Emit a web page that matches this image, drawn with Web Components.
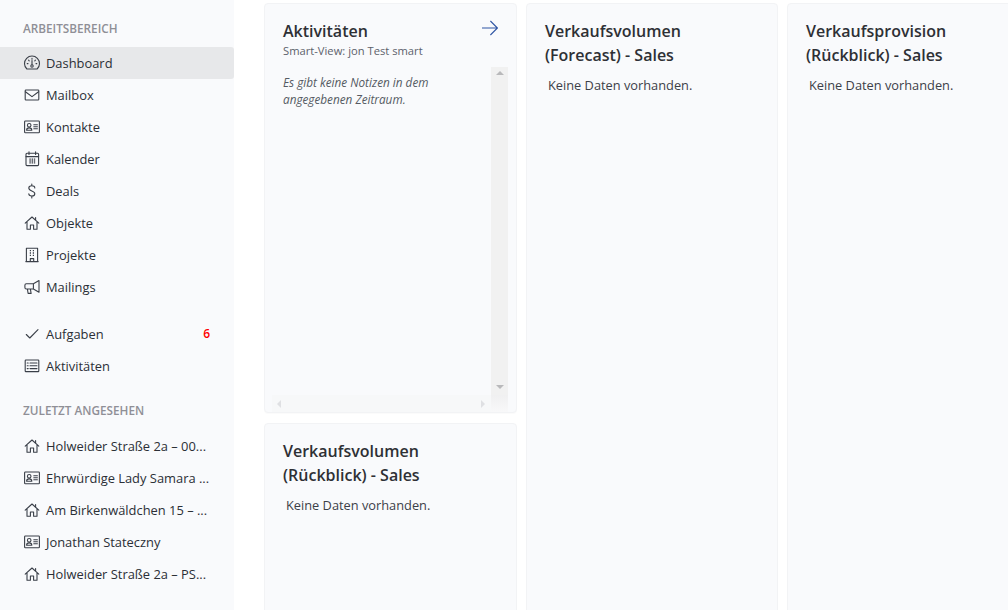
<!DOCTYPE html>
<html lang="de"><head><meta charset="utf-8"><title>Dashboard</title>
<style>
html,body{margin:0;height:100%;overflow:hidden;background:#fff;font-family:"Open Sans","Noto Sans",sans-serif;color:#212529}
#app{display:flex;height:610px;overflow:hidden}
</style></head><body>
<div id="app">
<app-sidebar>
  <nav-title>ARBEITSBEREICH</nav-title>
  <nav-item icon="gauge" active>Dashboard</nav-item>
  <nav-item icon="mail">Mailbox</nav-item>
  <nav-item icon="card">Kontakte</nav-item>
  <nav-item icon="calendar">Kalender</nav-item>
  <nav-item icon="dollar">Deals</nav-item>
  <nav-item icon="house">Objekte</nav-item>
  <nav-item icon="building">Projekte</nav-item>
  <nav-item icon="megaphone">Mailings</nav-item>
  <nav-item icon="check" badge="6" style="margin-top:15px">Aufgaben</nav-item>
  <nav-item icon="list">Aktivitäten</nav-item>
  <nav-title style="margin-top:18px;margin-bottom:10px">ZULETZT ANGESEHEN</nav-title>
  <nav-item icon="house">Holweider Straße 2a – 00...</nav-item>
  <nav-item icon="card">Ehrwürdige Lady Samara ...</nav-item>
  <nav-item icon="house">Am Birkenwäldchen 15 – ...</nav-item>
  <nav-item icon="card">Jonathan Stateczny</nav-item>
  <nav-item icon="house">Holweider Straße 2a – PS...</nav-item>
</app-sidebar>
<dash-board>
  <dash-column style="gap:10px">
    <dash-card heading="Aktivitäten" sub="Smart-View: jon Test smart" arrow style="height:410px"><notes-pane>Es gibt keine Notizen in dem<br>angegebenen Zeitraum.</notes-pane></dash-card>
    <dash-card heading="Verkaufsvolumen<br>(Rückblick) - Sales"><empty-note>Keine Daten vorhanden.</empty-note></dash-card>
  </dash-column>
  <dash-column style="width:252px">
    <dash-card heading="Verkaufsvolumen<br>(Forecast) - Sales"><empty-note>Keine Daten vorhanden.</empty-note></dash-card>
  </dash-column>
  <dash-column>
    <dash-card heading="Verkaufsprovision<br>(Rückblick) - Sales"><empty-note>Keine Daten vorhanden.</empty-note></dash-card>
  </dash-column>
</dash-board>
</div>
<script>
const ICONS={
gauge:'<path d="M2.9 14A7.5 7.5 0 1 1 13.1 14Z"/><path d="M8 3.4v.8M3.2 8.6H4M12 8.6h.8M4.6 5.2l.6.6M11.4 5.2l-.6.6M8 5.6v4"/><circle cx="8" cy="11" r="1.2"/>',
mail:'<rect x="1.2" y="3" width="13.6" height="10" rx=".8"/><path d="M1.4 4.8 8 9.6l6.6-4.8"/>',
card:'<rect x=".6" y="2" width="14.8" height="11.8" rx=".8"/><circle cx="5.2" cy="6.3" r="1.8"/><path d="M2.6 11.2c0-1.8 1.1-2.3 2.6-2.3s2.6.5 2.6 2.3zM9.8 5.8h3.6M9.8 7.8h3.6M9.8 9.8h3.6"/>',
calendar:'<rect x="2" y="2.2" width="12.6" height="12.4" rx="1"/><path d="M2 5.6h12.6M5 .8v2.6M11.6.8v2.6"/><path d="M5.4 8.2h1.4M7.6 8.2h1.4M9.8 8.2h1.4M5.4 10h1.4M7.6 10h1.4M9.8 10h1.4M5.4 11.8h1.4M7.6 11.8h1.4M9.8 11.8h1.4" stroke-linecap="butt" stroke-width="1.3"/>',
dollar:'<path d="M10.8 4.9C10.8 3.5 9.5 2.8 7.8 2.8S4.8 3.6 4.8 5.1c0 1.6 1.3 2.2 3 2.8 1.7.6 3 1.2 3 2.8s-1.3 2.3-3 2.3-3-.8-3-2.2M7.8 1v1.8M7.8 13v2"/>',
house:'<path d="M1.2 8.2 8 2l6.8 6.2M3 6.8v7.5h3.4V10h3.2v4.3H13V6.8M11.6 2.6v2.2"/>',
building:'<path d="M2.4 1.2h11.2v13.4H2.4zM1.8 14.6h12.4M6.3 14.6v-3h3.4v3"/><path d="M5.8 3.6h1.2M8.8 3.6H10M5.8 6h1.2M8.8 6H10M5.8 8.4h1.2M8.8 8.4H10" stroke-linecap="butt" stroke-width="1.3"/>',
megaphone:'<path d="M15 1.6 9.4 4.8H2.3A1.4 1.4 0 0 0 .9 6.2v2.4A1.4 1.4 0 0 0 2.3 10h7.1l5.6 3.2zM9.4 4.8V10M3.4 10l.7 4.4h3L6.4 10"/>',
check:'<path d="M2.3 8.5 5.8 12 14 3.6"/>',
list:'<rect x="1.2" y="2" width="13.6" height="11.6" rx=".7"/><path d="M6 5h7M6 7.8h7M6 10.6h7M3.2 5h1M3.2 7.8h1M3.2 10.6h1"/>'
};
const def=(n,html)=>customElements.define(n,class extends HTMLElement{
  connectedCallback(){if(!this.shadowRoot){const r=this.attachShadow({mode:'open'});r.innerHTML=typeof html==='function'?html(this):html;}}
});
def('app-sidebar',`<style>:host{display:block;flex:none;width:234px;height:610px;background:#f9fafc;padding-top:18px;box-sizing:border-box;overflow:hidden}</style><slot></slot>`);
def('nav-title',`<style>:host{display:block;height:20px;line-height:20px;margin:0 0 9px 23px;font-size:11.75px;font-weight:600;color:#8f8f96}</style><slot></slot>`);
def('nav-item',h=>`<style>
:host{display:flex;align-items:center;height:32px;padding-left:24px;font-size:12.9px;line-height:30px;color:#2b2f36;border-radius:0 3px 3px 0;white-space:nowrap}
:host([active]){background:#e7e8ea}
svg{width:16px;height:16px;flex:none;margin-right:6px;fill:none;stroke:#3a3f48;stroke-width:1.1;stroke-linecap:round;stroke-linejoin:round;overflow:visible}
span{display:block}
b{margin-left:auto;margin-right:24px;font-weight:600;color:#f00;font-size:12px}
</style><svg viewBox="0 0 16 16">${ICONS[h.getAttribute('icon')]}</svg><span><slot></slot></span>${h.hasAttribute('badge')?`<b>${h.getAttribute('badge')}</b>`:''}`);
def('dash-board',`<style>:host{flex:1;min-width:0;display:flex;gap:9px;padding:3px 0 0 30px;overflow:hidden}</style><slot></slot>`);
def('dash-column',`<style>:host{flex:none;width:253px;display:flex;flex-direction:column;gap:9px}</style><slot></slot>`);
def('dash-card',h=>`<style>
:host{display:flex;flex-direction:column;flex:none;height:640px;box-sizing:border-box;background:#f9fafc;border:1px solid #f2f3f5;border-radius:4px;box-shadow:0 1px 1px rgba(0,0,0,.02);padding:15px 8px 0 18px}
header{position:relative;padding-right:10px}
h2{margin:0;font-size:16px;line-height:24px;font-weight:600;color:#2e3035}
p{margin:0;font-size:11.2px;line-height:16px;color:#5c616b}
svg{position:absolute;right:10px;top:1px;width:16px;height:16px;fill:none;stroke:#2f55a4;stroke-width:1.1}
.body{flex:1;min-height:0;margin-top:8px}
</style><header><h2>${h.getAttribute('heading')}</h2>${h.hasAttribute('sub')?`<p>${h.getAttribute('sub')}</p>`:''}${h.hasAttribute('arrow')?'<svg viewBox="0 0 16 16"><path d="M0 8h15.4M8.4 1l7 7-7 7"/></svg>':''}</header><div class="body"><slot></slot></div>`);
def('empty-note',`<style>:host{display:block;padding-left:3px;font-size:12.8px;line-height:20px;color:#3c4048}</style><slot></slot>`);
def('notes-pane',`<style>
:host{display:grid;grid-template-columns:1fr 17px;grid-template-rows:1fr 17px;height:100%;margin-left:-11px}
.c{padding:7px 0 0 11px;font-style:italic;font-size:11.75px;line-height:17px;color:#555a63}
.v{background:#f1f1f1;position:relative}
.h{background:#f7f8f9;position:relative}
.k{background:linear-gradient(#f0f0f1,#f8f8f9)}
i{position:absolute;width:0;height:0;border:4px solid transparent}
.up{left:4.5px;top:4px;border-bottom:4px solid #b9b9bb;border-top:0}
.dn{left:4.5px;bottom:6px;border-top:4px solid #b9b9bb;border-bottom:0}
.lf{left:5px;top:5px;border-right:4px solid #dfe0e3;border-left:0}
.rt{right:6px;top:5px;border-left:4px solid #dfe0e3;border-right:0}
</style><div class="c"><slot></slot></div><div class="v"><i class="up"></i><i class="dn"></i></div><div class="h"><i class="lf"></i><i class="rt"></i></div><div class="k"></div>`);
</script>
</body></html>
